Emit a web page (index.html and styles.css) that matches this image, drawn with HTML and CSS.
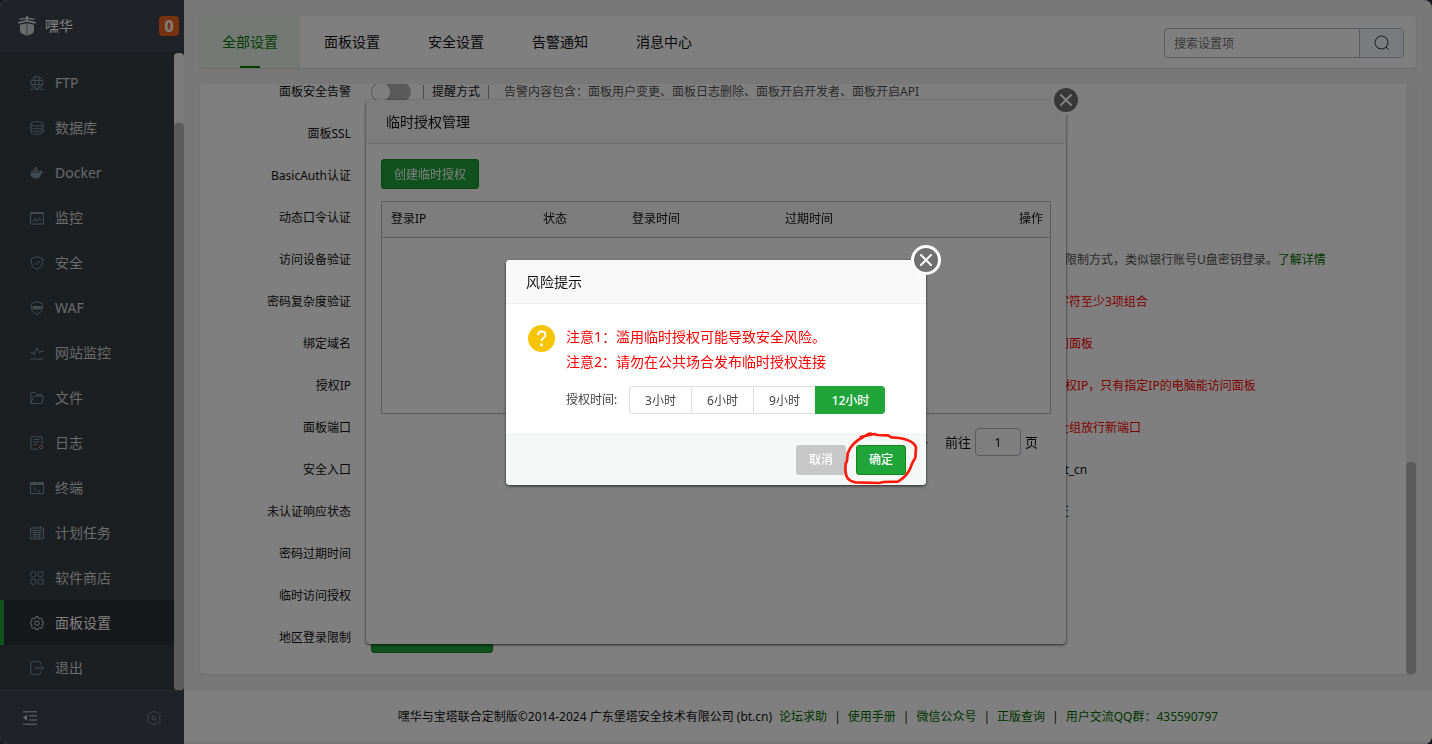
FILE: index.html
```html
<!DOCTYPE html>
<html lang="zh-CN">
<head>
<meta charset="utf-8">
<meta name="viewport" content="width=device-width, initial-scale=1">
<title>面板设置</title>
<link rel="stylesheet" href="styles.css">
</head>
<body>
<div class="app">
  <aside class="sidebar">
    <header class="brand">
      <svg class="brand-logo" viewBox="0 0 20 20" aria-hidden="true"><path fill="currentColor" d="M9 0h2v1.500l7 1.200-.6 1.300L11 3v1l8.500 2.300-1.500 1.400-8-2-8 2L.5 6.300 9 4V3L2.600 4 2 2.700l7-1.200zM3 8.700l6.700-1.500v12.600l-5-2.400Q3 16.500 3 14.500zM10.300 7.200L17 8.700v5.800q0 2-1.700 2.900l-5 2.400z"/></svg>
      <span class="brand-name">嘿华</span>
      <span class="badge">0</span>
    </header>
    <div class="menu-wrap">
      <nav class="menu">
        <a class="menu-item" href="#ftp"><svg class="ico" viewBox="0 0 14 14"><circle cx="7" cy="6.500" r="6"/><path d="M1.500 4.500h11M1.500 8.500h11M5 1v11M9 1v11M0 13.300h4M5 13.300h4M10 13.300h4"/></svg>FTP</a>
        <a class="menu-item" href="#db"><svg class="ico" viewBox="0 0 14 14"><ellipse cx="7" cy="2.800" rx="6" ry="2.200"/><path d="M1 3v8c0 3 12 3 12 0V3M1 5.700c0 3 12 3 12 0M1 8.400c0 3 12 3 12 0"/></svg>数据库</a>
        <a class="menu-item" href="#docker"><svg class="ico" viewBox="0 0 14 14"><path class="solid" d="M.5 6.500h9.700c-.5-.8-.4-1.700 0-2.500 1 .3 1.400 1 1.500 1.700.7-.1 1.500 0 2 .4-.4.900-1.200 1.300-2.200 1.300C10.500 11 8.500 12.500 5.500 12.500 2 12.500.3 10 .5 6.500zM1.500 4.500h1.600V6H1.500zM3.500 4.500h1.600V6H3.500zM5.500 4.500h1.600V6H5.500zM7.500 4.500h1.600V6H7.500zM3.500 2.700h1.600v1.500H3.500zM5.500 1h1.600v3.200H5.500z"/></svg>Docker</a>
        <a class="menu-item" href="#monitor"><svg class="ico" viewBox="0 0 14 14"><path d="M.5 1.500h13v11.500H.5zM.5 2.500h13M2.500 10h1.500l1.500-3 2 3.500 2-3.500 1 2h1"/></svg>监控</a>
        <a class="menu-item" href="#security"><svg class="ico" viewBox="0 0 14 14"><path d="M7 .7l5.700 2v4.500q0 4-5.700 6.200-5.700-2.200-5.700-6.200V2.700zM4.300 6.800l2 2 3.700-3.800"/></svg>安全</a>
        <a class="menu-item" href="#waf"><svg class="ico" viewBox="0 0 14 14"><path d="M7 .7l5.700 2v4.500q0 4-5.700 6.200-5.700-2.200-5.700-6.200V2.700z"/><path class="solid" d="M2.500 5h9v2.200q-.5.800-1 1.300h-7q-.5-.5-1-1.300z"/></svg>WAF</a>
        <a class="menu-item" href="#site"><svg class="ico" viewBox="0 0 14 14"><path d="M.5 6.500h2.300L4 8.800 6.800 1.500 9.500 7l1-1.500h3M1 13h12"/></svg>网站监控</a>
        <a class="menu-item" href="#files"><svg class="ico" viewBox="0 0 14 14"><path d="M.8 12.500v-11h4.500l1.200 2h5.200v1.700M.8 12.500h11l1.700-7.300H3.800L.8 12.500"/></svg>文件</a>
        <a class="menu-item" href="#logs"><svg class="ico" viewBox="0 0 14 14"><path d="M8 13.200H1V.8h11v7M3.500 3.500h6M3.500 6h6M3.500 8.500h4"/><circle class="dot" cx="11" cy="11" r="1.600"/></svg>日志</a>
        <a class="menu-item" href="#terminal"><svg class="ico" viewBox="0 0 14 14"><path d="M.5 1.500h13v11H.5zM.5 3.500h13M3.500 6l2 2-2 2M7 10h3.500M.5 2.500h13"/></svg>终端</a>
        <a class="menu-item" href="#cron"><svg class="ico" viewBox="0 0 14 14"><path d="M.5 2h13v11H.5zM.5 4.500h13M3.500.3V3M7 .3V3M10.500.3V3M2.500 6.500h9M2.500 8.700h9M2.500 11h9M5 5.500v6.500M9 5.500v6.500"/></svg>计划任务</a>
        <a class="menu-item" href="#store"><svg class="ico" viewBox="0 0 14 14"><rect x=".8" y=".8" width="5" height="5" rx="1"/><rect x="8.200" y=".8" width="5" height="5" rx="1"/><rect x=".8" y="8.200" width="5" height="5" rx="1"/><rect x="8.200" y="8.200" width="5" height="5" rx="1"/></svg>软件商店</a>
        <a class="menu-item active" href="#settings" aria-current="page"><svg class="ico" viewBox="0 0 14 14"><path d="M5.900.7h2.200l.4 1.600 1.300.5 1.400-.8 1.500 1.500-.8 1.400.5 1.200 1.300.3v1.400l-1.300.4-.5 1.300.8 1.300-1.500 1.600-1.400-.8-1.300.5-.4 1.500H5.900l-.4-1.500-1.300-.5-1.400.8-1.500-1.600.8-1.300-.5-1.300L.3 7.800V6.400l1.300-.3.500-1.200-.8-1.400L2.800 2l1.400.8 1.300-.5z"/><circle cx="7" cy="7.100" r="2.200"/></svg>面板设置</a>
        <a class="menu-item" href="#logout"><svg class="ico" viewBox="0 0 14 14"><path d="M10.500 3.500V2q0-1.300-1.300-1.300H2Q.8.700.8 2v10q0 1.300 1.200 1.300h7.200q1.300 0 1.300-1.300v-1.500M5 7h8.300M11 4.500L13.300 7 11 9.500"/></svg>退出</a>
      </nav>
      <div class="rail menu-rail" aria-hidden="true"><span class="thumb menu-thumb"></span></div>
    </div>
    <footer class="side-foot">
      <button class="plain" type="button" aria-label="收起菜单"><svg class="foot-ico" viewBox="0 0 14 14"><path d="M0 .8h14M6 4.800h8M6 9h8M0 13.200h14"/><path class="solid" d="M4 3.800v6L0 6.800z"/></svg></button>
      <button class="plain dim" type="button" aria-label="菜单设置"><svg class="foot-ico" viewBox="0 0 14 14"><path d="M4.200 1.800Q5.300.5 7 .7q1.700-.2 2.800 1.100l2 .4q1.500 1 1.400 2.700L12.300 7l.9 2.100q.1 1.700-1.400 2.700l-2 .4Q8.700 13.500 7 13.300q-1.700.2-2.800-1.100l-2-.4Q.7 10.800.8 9.100L1.700 7 .8 4.900q-.1-1.700 1.400-2.700z"/><circle cx="7" cy="7" r="2"/></svg></button>
    </footer>
  </aside>

  <main class="main">
    <div class="workspace">
      <div class="card topbar">
        <nav class="tabs">
          <a class="tab current" href="#all">全部设置</a>
          <a class="tab" href="#panel">面板设置</a>
          <a class="tab" href="#safe">安全设置</a>
          <a class="tab" href="#alarm">告警通知</a>
          <a class="tab" href="#message">消息中心</a>
        </nav>
        <form class="search">
          <input class="search-input" type="text" placeholder="搜索设置项" aria-label="搜索设置项">
          <button class="search-btn" type="button" aria-label="搜索"><svg class="search-ico" viewBox="0 0 16 16"><circle cx="7.500" cy="7.500" r="6.500"/><path d="M12.200 12.200l2.500 2.500"/></svg></button>
        </form>
      </div>

      <section class="card panel">
        <div class="rows">
          <div class="row"><label class="row-label" for="alarm-switch">面板安全告警</label>
            <div class="inline-controls"><input class="switch" id="alarm-switch" type="checkbox"><a class="mode" href="#mode">提醒方式</a><span class="note">告警内容包含：面板用户变更、面板日志删除、面板开启开发者、面板开启API</span></div></div>
          <div class="row"><span class="row-label">面板SSL</span></div>
          <div class="row"><span class="row-label">BasicAuth认证</span></div>
          <div class="row"><span class="row-label">动态口令认证</span></div>
          <div class="row"><span class="row-label">访问设备验证</span><span class="hint muted">的限制方式，类似银行账号U盘密钥登录。<a class="link" href="#more">了解详情</a></span></div>
          <div class="row"><span class="row-label">密码复杂度验证</span><span class="hint warn inset">字符至少3项组合</span></div>
          <div class="row"><span class="row-label">绑定域名</span><span class="hint warn inset">问面板</span></div>
          <div class="row"><span class="row-label">授权IP</span><span class="hint warn">授权IP，只有指定IP的电脑能访问面板</span></div>
          <div class="row"><span class="row-label">面板端口</span><span class="hint warn inset">全组放行新端口</span></div>
          <div class="row"><span class="row-label">安全入口</span><span class="hint inset">bt_cn</span></div>
          <div class="row"><span class="row-label">未认证响应状态</span><span class="hint inset">证</span></div>
          <div class="row"><span class="row-label">密码过期时间</span></div>
          <div class="row"><span class="row-label">临时访问授权</span></div>
          <div class="row"><span class="row-label">地区登录限制</span><button class="btn wide" type="button" aria-label="地区登录限制"></button></div>
        </div>
        <div class="rail panel-rail" aria-hidden="true"><span class="thumb panel-thumb"></span></div>
      </section>
    </div>

    <footer class="copyright">
      <span>嘿华与宝塔联合定制版©2014-2024 广东堡塔安全技术有限公司 (bt.cn)</span>
      <a class="link" href="#bbs">论坛求助</a><span>|</span>
      <a class="link" href="#manual">使用手册</a><span>|</span>
      <a class="link" href="#wechat">微信公众号</a><span>|</span>
      <a class="link" href="#genuine">正版查询</a><span>|</span>
      <a class="link" href="#qq">用户交流QQ群：435590797</a>
    </footer>
  </main>
</div>

<div class="layer">
  <section class="dialog manage" role="dialog" aria-label="临时授权管理">
    <button class="close deep" type="button" aria-label="关闭"><svg class="close-ico" viewBox="0 0 12 12"><path d="M1 1l10 10M11 1L1 11"/></svg></button>
    <h2 class="dialog-title">临时授权管理</h2>
    <div class="manage-body">
      <button class="btn create" type="button">创建临时授权</button>
      <div class="table-box">
        <table class="table">
          <thead><tr><th class="c-ip">登录IP</th><th class="c-state">状态</th><th class="c-login">登录时间</th><th class="c-expire">过期时间</th><th class="c-op">操作</th></tr></thead>
        </table>
      </div>
      <div class="pager"><span class="total">共 0 条</span><label for="page">前往</label><input class="page-input" id="page" type="text" value="1"><span>页</span></div>
    </div>
  </section>
</div>

<div class="layer shade">
  <section class="dialog confirm" role="dialog" aria-label="风险提示">
    <button class="close" type="button" aria-label="关闭"><svg class="close-ico" viewBox="0 0 12 12"><path d="M1 1l10 10M11 1L1 11"/></svg></button>
    <h2 class="dialog-title">风险提示</h2>
    <div class="confirm-body">
      <svg class="ask" viewBox="0 0 27 27" aria-hidden="true"><circle cx="13.500" cy="13.500" r="13.500"/><path d="M10 10.200q0-3.800 3.700-3.800t3.700 3.400q0 1.800-2 3.200-1.900 1.300-1.900 3.300"/><circle class="ask-dot" cx="13.500" cy="19.800" r="1.500"/></svg>
      <div class="confirm-text">
        <p class="alert">注意1：滥用临时授权可能导致安全风险。</p>
        <p class="alert">注意2：请勿在公共场合发布临时授权连接</p>
        <div class="duration" role="radiogroup" aria-label="授权时间">
          <span class="duration-label">授权时间:</span>
          <label class="choice"><input class="choice-input" type="radio" name="hours">3小时</label>
          <label class="choice"><input class="choice-input" type="radio" name="hours">6小时</label>
          <label class="choice"><input class="choice-input" type="radio" name="hours">9小时</label>
          <label class="choice picked"><input class="choice-input" type="radio" name="hours" checked>12小时</label>
        </div>
      </div>
    </div>
    <div class="confirm-foot">
      <button class="btn cancel" type="button">取消</button>
      <div class="marked">
        <button class="btn ok" type="button">确定</button>
        <svg class="scribble" viewBox="1020 585 240 171" aria-hidden="true"><path d="M1082 606L1122 597 1132 600 1164 601 1174 607 1198 609Q1245 618 1248 638L1246 668 1236 686Q1226 722 1194 740L1150 741 1138 744 1066 742Q1044 738 1039 722L1036 706 1037 686 1041 678 1043 655Q1056 622 1090 606L1104 597 1112 596"/></svg>
      </div>
    </div>
  </section>
</div>
</body>
</html>
```

FILE: styles.css
```css
* { box-sizing: border-box; }

body {
  margin: 0;
  background: #30333d;
  color: #111;
  font: 12px/20px "Noto Sans", "Noto Sans CJK SC", sans-serif;
}

button, input { font: inherit; color: inherit; }
button { padding: 0; cursor: pointer; }
a { color: inherit; text-decoration: none; }
p, h2 { margin: 0; }
svg { display: block; fill: none; stroke: currentColor; }
.solid { fill: currentColor; stroke: none; }

.app {
  display: flex;
  height: 100vh;
  background: #f0f0f0;
  border-radius: 8px;
  overflow: hidden;
}

/* sidebar */
.sidebar {
  display: flex;
  flex-direction: column;
  flex: 0 0 184px;
  background: #3e474e;
  color: #d2d4d6;
  font-size: 14px;
}
.brand {
  display: flex;
  align-items: center;
  height: 53px;
  padding: 0 5px 0 17px;
  border-bottom: 1px solid #343b41;
}
.brand-logo { width: 20px; height: 20px; stroke: none; }
.brand-name { flex: 1; padding-left: 8px; color: #fff; }
.badge {
  width: 20px;
  height: 20px;
  border-radius: 4px;
  background: #f0651f;
  color: #fff;
  font-size: 16px;
  font-weight: 700;
  text-align: center;
}
.menu-wrap { display: flex; flex: 1; min-height: 0; background: #363e44; }
.menu { flex: 1; padding-top: 7px; overflow: hidden; }
.menu-item {
  display: flex;
  align-items: center;
  gap: 11px;
  height: 45px;
  padding-left: 26px;
  border-left: 4px solid transparent;
}
.menu-item.active { background: #2e3037; border-left-color: #20a53a; color: #fff; }
.ico { width: 14px; height: 14px; color: #82949f; }
.active .ico { color: #e0e2e4; }
.dot { stroke: #c08080; }
.rail { flex: 0 0 10px; display: flex; flex-direction: column; justify-content: flex-end; border-radius: 4px; }
.thumb { border-radius: 4px; background: #b9b9b9; }
.menu-rail { background: #f4f4f4; }
.menu-thumb { height: 89%; }
.side-foot {
  display: flex;
  align-items: center;
  justify-content: space-between;
  height: 54px;
  padding: 0 23px;
  border-top: 1px solid #4e565c;
}
.plain { border: 0; background: none; color: #d2d4d6; }
.plain.dim { color: #838a90; }
.foot-ico { width: 14px; height: 14px; }

/* main area */
.main { display: flex; flex: 1; flex-direction: column; min-width: 0; }
.workspace {
  display: flex;
  flex: 1;
  flex-direction: column;
  gap: 16px;
  min-height: 0;
  padding: 16px;
}
.card { background: #fff; border-radius: 4px; box-shadow: 0 1px 2px rgba(0, 0, 0, .1); }
.topbar { display: flex; justify-content: space-between; flex: 0 0 52px; padding-right: 12px; }
.tabs { display: flex; font-size: 14px; }
.tab { position: relative; padding: 0 24px; line-height: 52px; }
.tab.current { padding: 0 22px; background: #e8f3ea; color: #0a7a00; border-radius: 4px 0 0 4px; }
.tab.current::after {
  content: "";
  position: absolute;
  bottom: 0;
  left: 40px;
  width: 20px;
  height: 2px;
  background: #0a7a00;
}
.search { display: flex; width: 240px; height: 30px; margin-top: 12px; border: 1px solid #b4b8c2; border-radius: 4px; }
.search-input { flex: 1; min-width: 0; padding: 1px 9px 0; border: 0; background: none; }
.search-input::placeholder { color: #757575; opacity: 1; }
.search-btn {
  display: flex;
  align-items: center;
  justify-content: center;
  width: 44px;
  border: 0;
  border-left: 1px solid #b4b8c2;
  border-radius: 0 3px 3px 0;
  background: #f5f7fa;
  color: #333;
}
.search-ico { width: 16px; height: 16px; }

.panel { display: flex; flex: 1; min-height: 0; overflow: hidden; }
.rows { flex: 1; min-width: 0; margin-top: -13px; line-height: 14px; }
.row { display: grid; grid-template-columns: 151px 682px 1fr; align-items: center; height: 42px; white-space: nowrap; column-gap: 20px; }
.row-label { text-align: right; }
.inline-controls { display: flex; align-items: center; }
.switch {
  appearance: none;
  display: flex;
  width: 40px;
  height: 20px;
  margin: 0 12px 0 0;
  padding: 1px;
  border-radius: 10px;
  background: #b4b4b4;
}
.switch::before { content: ""; width: 18px; height: 18px; border-radius: 9px; background: #fff; }
.mode { padding: 0 8px; border: 1px solid #999; border-width: 0 1px; }
.note { padding-left: 15px; color: #555; }
.hint { grid-column: 3; margin-left: -20px; }
.hint.inset { padding-left: 4px; }
.muted { color: #555; }
.warn { color: #f00; }
.link { color: #006a00; }
.btn {
  height: 30px;
  padding-top: 1px;
  border: 1px solid #108a10;
  border-radius: 3px;
  background: #20a53a;
  color: #fff;
}
.wide { width: 122px; }
.panel-rail { background: #ececec; }
.panel-thumb { height: 36%; background: #b9b9b9; }

.copyright {
  display: flex;
  align-items: center;
  justify-content: center;
  gap: 7px;
  height: 54px;
  padding-top: 2px;
  background: #fff;
  border-bottom: 2px solid #f0f0f0;
}

/* dialogs */
.layer { position: fixed; inset: 0; display: flex; align-items: center; justify-content: center; }
.shade { background: rgba(0, 0, 0, .5); }
.dialog { position: relative; border-radius: 4px; background: #fff; box-shadow: 0 1px 3px rgba(0, 0, 0, .7); }
.manage { width: 700px; min-height: 544px; }
.confirm { width: 420px; }
.dialog-title {
  height: 44px;
  padding: 0 20px;
  border-bottom: 1px solid #eee;
  border-radius: 4px 4px 0 0;
  background: #f8f8f8;
  font-size: 14px;
  font-weight: 400;
  line-height: 43px;
}
.manage .dialog-title { border-bottom-color: #dcdcdc; }
.close {
  position: absolute;
  top: -15px;
  right: -15px;
  display: flex;
  align-items: center;
  justify-content: center;
  width: 30px;
  height: 30px;
  border: 3px solid #fff;
  border-radius: 50%;
  background: #707070;
  color: #fff;
}
.close-ico { width: 12px; height: 12px; stroke-width: 2; stroke-linecap: round; }

.manage-body { padding: 15px 15px 20px; }
.create { padding: 1px 12px 0; }
.table-box { min-height: 213px; margin-top: 12px; border: 1px solid #b8b8b8; }
.table { width: 100%; border-collapse: collapse; table-layout: fixed; }
.table th { height: 35px; padding: 0 9px; border-bottom: 1px solid #b8b8b8; background: #fafafa; font-weight: 400; text-align: left; }
.c-ip { width: 152px; }
.c-state { width: 89px; }
.c-login { width: 153px; }
.table .c-op { padding-right: 7px; text-align: right; }
.pager { display: flex; align-items: center; justify-content: flex-end; gap: 4px; padding: 14px 13px 0; font-size: 13px; }
.total { margin-right: 13px; }
.page-input { width: 46px; height: 28px; padding: 0; border: 1px solid #b4b8c2; border-radius: 4px; background: none; text-align: center; }

.confirm-body { display: flex; gap: 11px; padding: 20px 22px; }
.ask { width: 27px; height: 27px; margin-top: 1px; fill: #f6c400; stroke: none; }
.ask path { fill: none; stroke: #fff; stroke-width: 2; }
.ask .ask-dot { fill: #fff; }
.alert { color: #f00; font-size: 14px; line-height: 25px; }
.duration { display: flex; align-items: center; margin-top: 12px; color: #444; }
.duration-label { width: 63px; }
.choice {
  position: relative;
  width: 62px;
  height: 28px;
  border: 1px solid #dcdfe6;
  border-right: 0;
  line-height: 27px;
  text-align: center;
  cursor: pointer;
}
.choice:nth-of-type(1) { border-radius: 4px 0 0 4px; }
.choice.picked { width: 70px; border-color: #20a53a; border-radius: 0 4px 4px 0; background: #20a53a; color: #fff; font-weight: 500; }
.choice-input { position: absolute; inset: 0; margin: 0; opacity: 0; }
.confirm-foot {
  display: flex;
  justify-content: flex-end;
  gap: 10px;
  padding: 10px 20px;
  border-top: 1px solid #e8eeee;
  border-radius: 0 0 4px 4px;
  background: #f6f8f8;
}
.cancel, .ok { width: 50px; font-weight: 500; }
.cancel { border-color: #c8c8c8; background: #c8c8c8; }
.marked { position: relative; }
.scribble {
  position: absolute;
  top: -15px;
  left: -16px;
  width: 80px;
  height: 57px;
  stroke: #ff1a0a;
  stroke-width: 8;
  stroke-linecap: round;
  stroke-linejoin: round;
  pointer-events: none;
}
.deep { background: #707070; }
```
